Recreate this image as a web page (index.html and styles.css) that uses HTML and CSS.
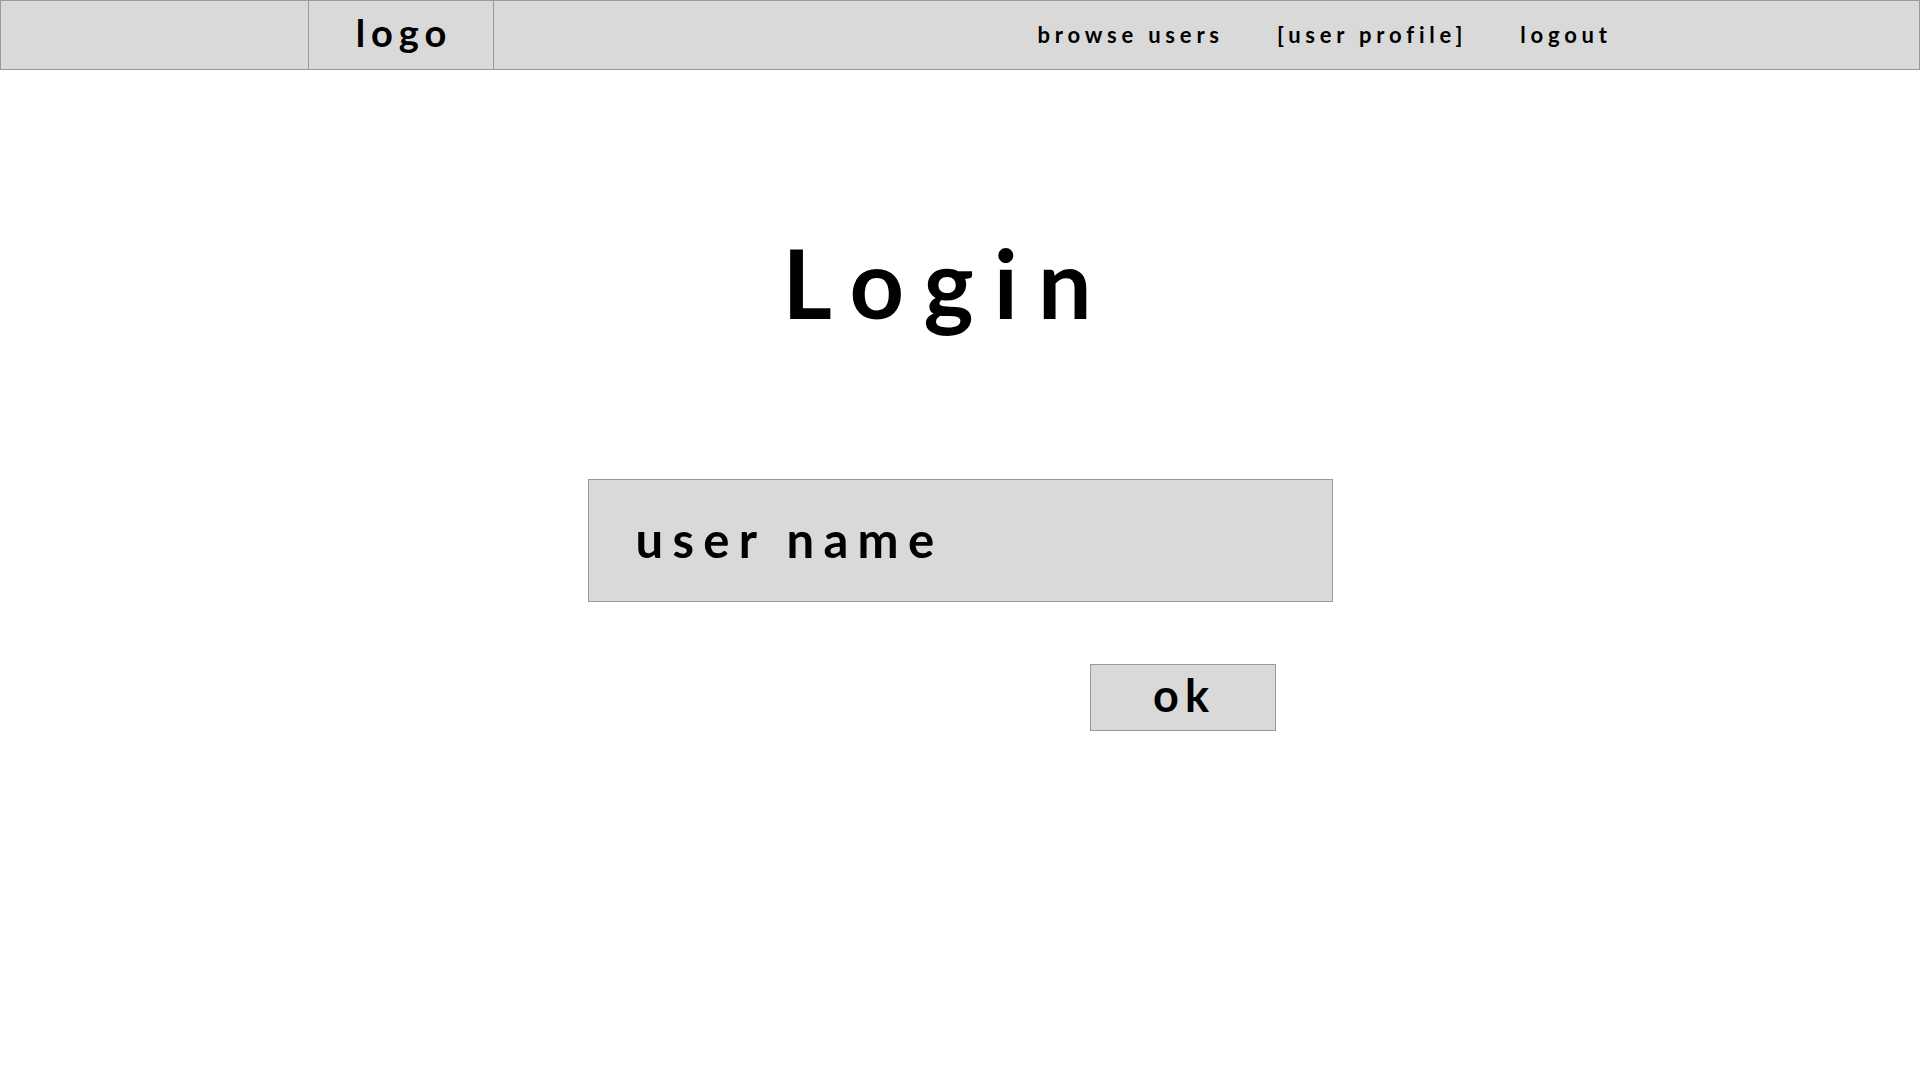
FILE: index.html
```html
<!DOCTYPE html>
<html lang="en">
<head>
<meta charset="utf-8">
<title>Login</title>
<link rel="stylesheet" href="styles.css">
</head>
<body>
<header class="topbar">
  <div class="logo-cell"><span class="logo">logo</span></div>
  <nav class="nav">
    <a class="nav-item" href="#">browse users</a>
    <a class="nav-item" href="#">[user profile]</a>
    <a class="nav-item" href="#">logout</a>
  </nav>
</header>
<main class="main">
  <h1 class="title">Login</h1>
  <div class="form">
    <div class="field">user name</div>
    <div class="actions">
      <button class="ok-btn" type="button">ok</button>
    </div>
  </div>
</main>
</body>
</html>
```

FILE: styles.css
```css
html, body {
  margin: 0;
  padding: 0;
  background: #ffffff;
}

body {
  font-family: Lato, "Liberation Sans", sans-serif;
  color: #000;
}

.topbar {
  box-sizing: border-box;
  height: 70px;
  border: 1px solid #999999;
  background: #d9d9d9;
  display: flex;
  align-items: stretch;
}

.logo-cell {
  box-sizing: border-box;
  margin-left: 307px;
  width: 186px;
  border-left: 1px solid #999999;
  border-right: 1px solid #999999;
  display: flex;
  align-items: center;
  justify-content: center;
  padding-bottom: 4px;
}

.logo {
  font-size: 38px;
  line-height: 1.2;
  font-weight: 700;
  letter-spacing: 6px;
  margin-right: -6px;
}

.nav {
  margin-left: auto;
  margin-right: 312px;
  display: flex;
  align-items: center;
  gap: 58px;
}

.nav-item {
  font-size: 22px;
  line-height: 1.2;
  font-weight: 700;
  letter-spacing: 4.8px;
  margin-right: -4.8px;
  color: #000;
  text-decoration: none;
}

.main {
  display: flex;
  flex-direction: column;
  align-items: center;
  padding-top: 155px;
}

.title {
  margin: 0;
  font-size: 95px;
  line-height: 1.2;
  font-weight: 700;
  letter-spacing: 20px;
  margin-right: 26px;
}

.form {
  margin-top: 140px;
  width: 745px;
  display: flex;
  flex-direction: column;
}

.field {
  box-sizing: border-box;
  height: 123px;
  border: 1px solid #999999;
  background: #d9d9d9;
  display: flex;
  align-items: center;
  padding-left: 47px;
  padding-bottom: 3px;
  font-size: 49px;
  line-height: 1.2;
  font-weight: 700;
  letter-spacing: 9.3px;
}

.actions {
  display: flex;
  justify-content: flex-end;
  margin-top: 62px;
  padding-right: 57px;
}

.ok-btn {
  box-sizing: border-box;
  width: 186px;
  height: 67px;
  border: 1px solid #999999;
  background: #d9d9d9;
  border-radius: 0;
  padding: 0 0 6px 0;
  font-family: Lato, "Liberation Sans", sans-serif;
  font-size: 45px;
  line-height: 1.2;
  font-weight: 700;
  letter-spacing: 6px;
  text-indent: 3px;
  color: #000;
}
```
